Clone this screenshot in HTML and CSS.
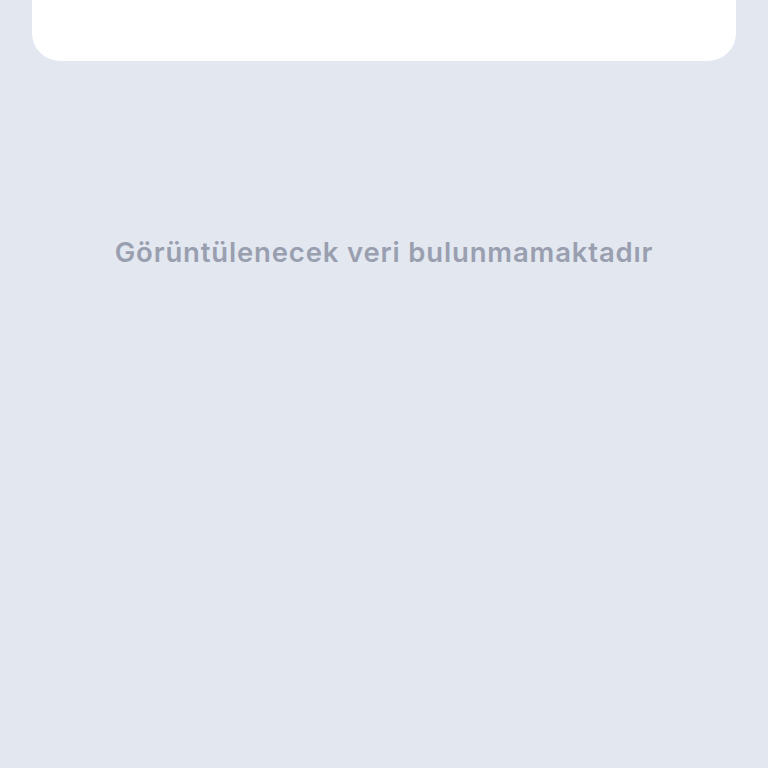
FILE: index.html
```html
<!DOCTYPE html>
<html lang="tr">
<head>
    <meta charset="UTF-8">
    <meta name="viewport" content="width=device-width, initial-scale=1.0">
    <title>Veri</title>
    <link rel="stylesheet" href="styles.css">
</head>
<body>
    <div class="top-card"></div>
    <main class="empty-state">
        <p class="empty-text">Görüntülenecek veri bulunmamaktadır</p>
    </main>
</body>
</html>
```

FILE: styles.css
```css
body {
    margin: 0;
    padding: 0;
    background-color: #e3e8f0;
    font-family: Inter, 'Noto Sans', sans-serif;
    min-height: 100vh;
}
.top-card {
    height: 61px;
    margin: 0 32px;
    background-color: #ffffff;
    border-radius: 0 0 28px 28px;
}
.empty-state {
    padding-top: 172px;
    text-align: center;
}
.empty-text {
    margin: 0;
    font-size: 27.5px;
    line-height: 38px;
    font-weight: 600;
    color: #9a9fb0;
    letter-spacing: 0.83px;
}
```
